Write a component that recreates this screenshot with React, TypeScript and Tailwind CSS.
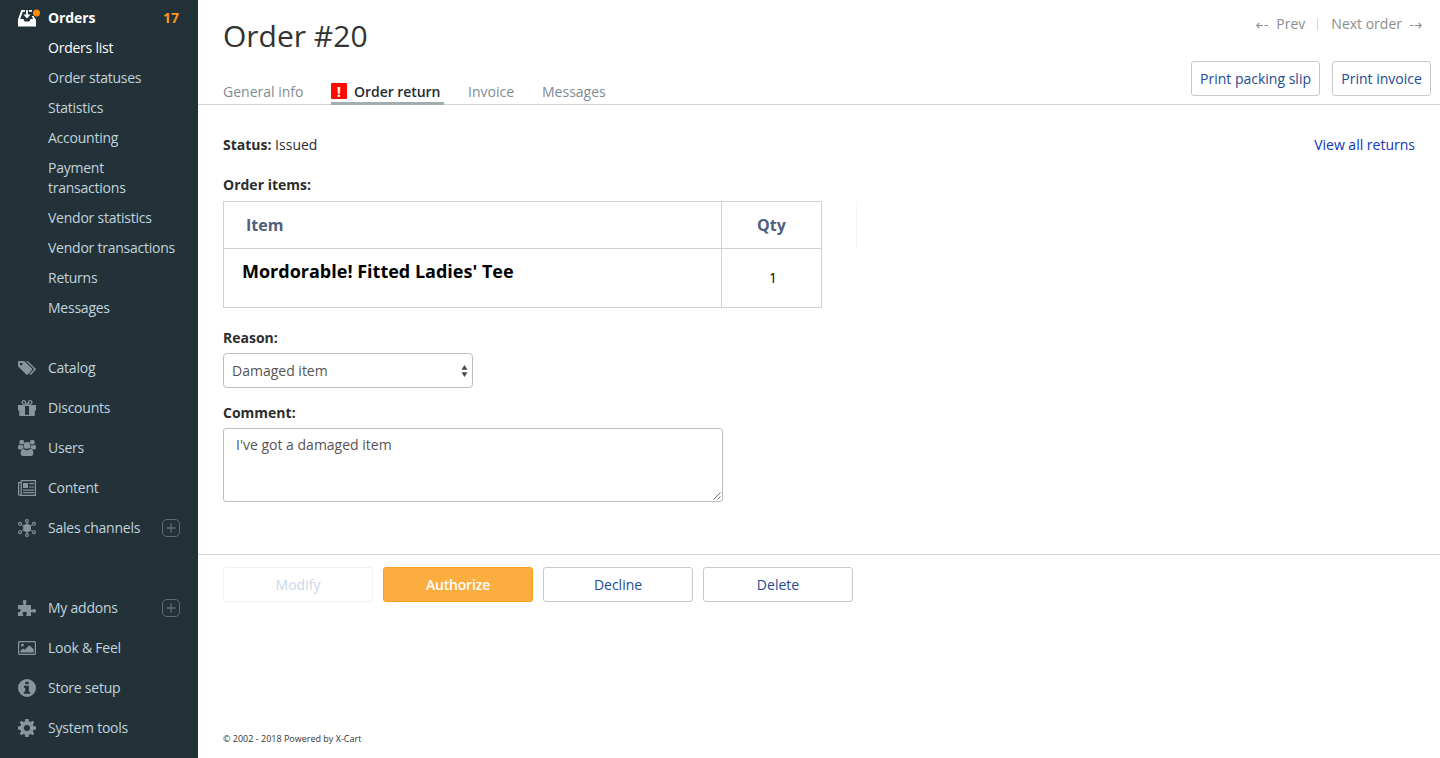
import type { ReactNode } from "react";

function OrdersIcon() {
  return (
    <svg width="24" height="19" viewBox="0 0 24 19" fill="none">
      <path d="M3.300 1H7V2.700H4.900L2 10.500H0ZM11 1h3v1.700h-3zM13.800 7h1.900l1.600 3.500h-2.100z" fill="#fff" />
      <path d="M0 10h5.400l1.200 2.400h4.800l1.200-2.400H18v7.500H0z" fill="#fff" />
      <path d="M8.100 1h1.800v4.600h2.700L9 9.400 5.400 5.600h2.700z" fill="#fff" />
      <circle cx="18.500" cy="4" r="3.500" fill="#ff8c00" />
    </svg>
  );
}

function Icon({ children }: { children: ReactNode }) {
  return (
    <svg width="18" height="18" viewBox="0 0 18 18" fill="#8a949b">
      {children}
    </svg>
  );
}

const icons: Record<string, ReactNode> = {
  catalog: (
    <Icon>
      <path
        fillRule="evenodd"
        d="M0 3.200Q0 2 1.200 2H5.400Q6.300 2 7 2.700L14 9.600Q14.600 10.300 14 11L9.700 15.400Q9 16 8.300 15.400L.900 8.300Q0 7.500 0 6.600ZM3.200 3.800A1.300 1.300 0 1 0 3.200 6.400A1.300 1.300 0 1 0 3.200 3.800Z"
      />
      <path d="M7.600 2H8.900Q9.800 2 10.500 2.700L17.500 9.600Q18.200 10.300 17.500 11L13.200 15.400Q12.300 16.200 11.300 15.100L15.500 10.900Q16.200 10.300 15.500 9.600L8.900 2.900Q8.300 2.300 7.600 2Z" />
    </Icon>
  ),
  discounts: (
    <Icon>
      <path d="M0 6h7v5.500H0zM11 6h7v5.500h-7z" />
      <path d="M1.200 11H7v6H2.200Q1.200 17 1.200 16zM11 11h5.800v5q0 1-1 1H11zM7 15.800h4V17H7zM7 6h4v1H7z" />
      <path
        d="M8.400 5.200H5.600A1.750 1.750 0 1 1 7.100 2.300ZM9.600 5.200h2.800A1.750 1.750 0 1 0 10.900 2.300Z"
        fill="none"
        stroke="#8a949b"
        strokeWidth="1.300"
      />
    </Icon>
  ),
  users: (
    <Icon>
      <circle cx="3.700" cy="3.200" r="2.400" />
      <circle cx="14.300" cy="3.200" r="2.400" />
      <circle cx="9" cy="6.400" r="3.400" />
      <path d="M0 8.500Q0 5.500 1.400 5.500Q3.200 6.900 4.800 6.100Q4.800 8 6 9.300Q4.500 9.400 3.400 10.400H1.500Q0 10.400 0 8.500ZM18 8.500Q18 5.500 16.600 5.500Q14.800 6.900 13.200 6.100Q13.200 8 12 9.300Q13.500 9.400 14.600 10.400H16.500Q18 10.400 18 8.500Z" />
      <path d="M2.600 14.600Q2.600 10 5.600 10Q9 12.400 12.400 10Q15.400 10 15.400 14.600Q15.400 17 13.200 17H4.800Q2.600 17 2.600 14.600Z" />
    </Icon>
  ),
  content: (
    <Icon>
      <path
        d="M3.200 1.600H17.400V16.400H2Q.600 16.400 .600 15V3.600H3.200M3.200 1.600V15Q3.200 16.400 2 16.400"
        fill="none"
        stroke="#8a949b"
        strokeWidth="1.300"
      />
      <path d="M5 4h5v5H5zM11 4h5v1.200h-5zM11 7.400h5v1.200h-5zM5 10.500h11v1.200H5zM5 13.100h11v1.200H5z" />
    </Icon>
  ),
  sales: (
    <Icon>
      <circle cx="9" cy="9" r="4" />
      <g fill="none" stroke="#8a949b" strokeWidth="1.100">
        <path d="M9 3.500V14.500M3.300 5.600L14.700 12.400M14.700 5.600L3.300 12.400" />
        <circle cx="9" cy="2" r="1.400" />
        <circle cx="9" cy="16" r="1.400" />
        <circle cx="2" cy="4.800" r="1.400" />
        <circle cx="16" cy="4.800" r="1.400" />
        <circle cx="2" cy="13.200" r="1.400" />
        <circle cx="16" cy="13.200" r="1.400" />
      </g>
    </Icon>
  ),
  addons: (
    <Icon>
      <path d="M0 6H5.200Q5.900 5.500 5.200 4.300Q3.900 1 6.700 1Q9.300 1 8.100 4.300Q7.300 5.500 8.200 6H13V10.200Q13.300 11.300 14.400 10.500Q18 9.100 18 11.900Q18 14.700 14.700 13.300Q13.300 12.400 13 13.500V17H8.200V15.800Q9.600 14.600 8.500 13.300Q6.600 12 4.900 13.300Q3.800 14.600 5.200 15.800V17H0V13Q2.600 13.600 2.600 11.500Q2.600 9.600 0 10.200Z" />
    </Icon>
  ),
  look: (
    <Icon>
      <rect x=".600" y="2.600" width="16.800" height="12.800" rx=".800" fill="none" stroke="#8a949b" strokeWidth="1.200" />
      <circle cx="4.400" cy="5.900" r="1.500" />
      <path d="M2.400 13.500V11.500L5.200 9.500L6.700 10.800L11.300 6.300L15.700 10.300V13.500Z" />
    </Icon>
  ),
  setup: (
    <Icon>
      <path
        fillRule="evenodd"
        d="M9 0A9 9 0 1 1 9 18A9 9 0 1 1 9 0ZM7.300 2.700V5.300H10.700V2.700ZM5.900 6.800V8.800H7.200V12.800H5.900V14.800H12.100V12.800H10.800V6.800Z"
      />
    </Icon>
  ),
  tools: (
    <Icon>
      <path
        fillRule="evenodd"
        d="M7.400 0H10.600L11.100 2.500L12.500 3.100L14.600 1.700L16.300 3.400L14.900 5.500L15.500 6.900L18 7.400V10.600L15.500 11.100L14.900 12.500L16.300 14.600L14.600 16.300L12.500 14.900L11.100 15.500L10.600 18H7.400L6.900 15.500L5.500 14.900L3.400 16.300L1.700 14.600L3.100 12.500L2.500 11.100L0 10.600V7.400L2.500 6.900L3.100 5.500L1.700 3.400L3.400 1.700L5.500 3.100L6.900 2.500ZM9 6A3 3 0 1 0 9 12A3 3 0 1 0 9 6Z"
      />
    </Icon>
  ),
};

function Plus() {
  return (
    <svg className="ml-auto" width="18" height="18" viewBox="0 0 18 18" fill="none" stroke="#5f6d74">
      <rect x=".5" y=".5" width="17" height="17" rx="4.500" />
      <path d="M9 4.500V13.500M4.500 9H13.500" strokeWidth="1.300" />
    </svg>
  );
}

function MenuItem({ icon, label, plus }: { icon: string; label: string; plus?: boolean }) {
  return (
    <a className="flex h-10 items-center pr-[18px] pl-[18px]">
      {icons[icon]}
      <span className="ml-3 whitespace-nowrap">{label}</span>
      {plus && <Plus />}
    </a>
  );
}

const subItems = [
  "Order statuses",
  "Statistics",
  "Accounting",
  "Payment transactions",
  "Vendor statistics",
  "Vendor transactions",
  "Returns",
  "Messages",
];

function Sidebar() {
  return (
    <aside className="flex w-[198px] shrink-0 flex-col bg-[#233239] pt-[3px] tracking-[-0.24px] text-[#c1d3dd]">
      <div className="flex h-[30px] items-center pr-[19px] pl-[18px] font-bold">
        <OrdersIcon />
        <span className="ml-1.5 tracking-[-0.1px] text-white">Orders</span>
        <span className="ml-auto tracking-normal text-[#ff9321]">17</span>
      </div>
      <a className="block py-[5px] pl-12 text-white">Orders list</a>
      {subItems.map((s) => (
        <a key={s} className="block py-[5px] pr-[20px] pl-12">
          {s}
        </a>
      ))}
      <nav className="mt-[25px]">
        <MenuItem icon="catalog" label="Catalog" />
        <MenuItem icon="discounts" label="Discounts" />
        <MenuItem icon="users" label="Users" />
        <MenuItem icon="content" label="Content" />
        <MenuItem icon="sales" label="Sales channels" plus />
      </nav>
      <nav className="mt-10">
        <MenuItem icon="addons" label="My addons" plus />
        <MenuItem icon="look" label="Look & Feel" />
        <MenuItem icon="setup" label="Store setup" />
        <MenuItem icon="tools" label="System tools" />
      </nav>
    </aside>
  );
}

const button =
  "flex h-[35px] items-center justify-center rounded-[3px] border border-[#c9c9c9] bg-white text-[#224b94]";

function Header() {
  return (
    <header className="flex h-[105px] justify-between border-b border-[#d3d6d6] pl-[25px] pr-[9px]">
      <div>
        <h1 className="mt-[16px] text-[30px] leading-10">Order #20</h1>
        <nav className="mt-[25px] flex h-6 text-[#7d8c94]">
          <a className="w-[108px] pt-px">General info</a>
          <a className="mr-6 flex w-[113px] border-b-[3px] border-[#a0adb1] pt-px font-semibold text-[#232d33]">
            <span className="mt-px mr-[7px] flex size-4 items-center justify-center rounded-[1px] bg-[#ff0a00] text-[15px] font-bold text-white">
              !
            </span>
            <span className="whitespace-nowrap tracking-[-0.05px]">Order return</span>
          </a>
          <a className="w-[74px] pt-px">Invoice</a>
          <a className="pt-px">Messages</a>
        </nav>
      </div>
      <div className="flex flex-col items-end">
        <div className="mt-[14px] mr-[9px] flex h-5 items-center text-[#8d8d8d]">
          <svg className="mt-[3px]" width="12" height="7" viewBox="0 0 12 7" fill="none" stroke="#8d8d8d" strokeWidth="1.200">
            <path d="M3.300 .900L.800 3.500L3.300 6.100M.800 3.500H7M8.500 3.500H12" />
          </svg>
          <span className="ml-[8px]">Prev</span>
          <span className="mr-[13px] ml-[12px] h-[11px] w-px bg-[#d3d3d3]" />
          <span>Next order</span>
          <svg className="mt-[3px] ml-[8px]" width="12" height="7" viewBox="0 0 12 7" fill="none" stroke="#8d8d8d" strokeWidth="1.200">
            <path d="M8.700 .900L11.200 3.500L8.700 6.100M11.200 3.500H5M3.500 3.500H0" />
          </svg>
        </div>
        <div className="mt-[27px] flex gap-3">
          <button className={`${button} w-[129px]`}>Print packing slip</button>
          <button className={`${button} w-[99px]`}>Print invoice</button>
        </div>
      </div>
    </header>
  );
}

function ItemsTable() {
  return (
    <div className="mt-[6px] flex items-start">
      <div className="grid w-[599px] grid-cols-[497px_100px] border border-[#d1d1d1]">
        <div className="flex h-[47px] items-center border-b border-[#d1d1d1] pl-[22px] text-base font-bold text-[#4f5f7d]">
          Item
        </div>
        <div className="flex items-center justify-center border-b border-l border-[#d1d1d1] text-base font-bold text-[#4f5f7d]">
          Qty
        </div>
        <div className="h-[58px] pt-[9px] pl-[18px] text-lg leading-[26px] font-bold text-black">
          Mordorable! Fitted Ladies' Tee
        </div>
        <div className="flex items-center justify-center border-l border-[#d1d1d1] pl-[3px] text-black">1</div>
      </div>
      <div className="ml-[34px] h-[47px] w-px bg-[#f4f4f4]" />
    </div>
  );
}

function ReturnForm() {
  return (
    <section className="h-[449px] pt-[30px] pl-[25px] text-[#2d2d2d]">
      <div className="flex justify-between pr-[25px]">
        <div>
          <b>Status:</b> Issued
        </div>
        <a className="text-[#0f35b8]">View all returns</a>
      </div>
      <div className="mt-5 font-bold">Order items:</div>
      <ItemsTable />
      <div className="mt-5 font-bold">Reason:</div>
      <div className="mt-[5px] flex h-[35px] w-[250px] items-center justify-between rounded-[4px] border border-[#bdbdbd] bg-white pr-1 pl-2 text-[#555]">
        Damaged item
        <svg width="7" height="12" viewBox="0 0 7 12" fill="#4c4c4c">
          <path d="M.5 4.700L3.500 0L6.500 4.700ZM.5 7.300H6.500L3.500 12Z" />
        </svg>
      </div>
      <div className="mt-[15px] font-bold">Comment:</div>
      <div className="mt-[5px] flex h-[74px] w-[500px] justify-between rounded-[3px] border border-[#bdbdbd] bg-white pt-[6px] pl-3 text-[#555]">
        I've got a damaged item
        <svg className="mr-px mb-px self-end" width="8" height="8" viewBox="0 0 8 8" stroke="#6b6b6b" strokeWidth="1">
          <path d="M.5 7.500L7.500 .5M4.500 7.500L7.500 4.500" />
        </svg>
      </div>
    </section>
  );
}

export default function App() {
  return (
    <div className="flex h-[758px] w-[1440px] overflow-hidden bg-white font-['Open_Sans','Noto_Sans',sans-serif] text-[14px] leading-5 text-[#333]">
      <Sidebar />
      <main className="flex min-w-0 flex-1 flex-col">
        <Header />
        <ReturnForm />
        <div className="flex gap-[10px] border-t border-[#d3d6d6] pt-3 pl-[25px]">
          <button className="flex h-[35px] w-[150px] items-center justify-center rounded-[3px] border border-[#f1f1f1] text-[#cad6ea]">
            Modify
          </button>
          <button className="flex h-[35px] w-[150px] items-center justify-center rounded-[3px] border border-[#f9a11b] bg-[#fbad40] font-semibold tracking-[-0.2px] text-white">
            Authorize
          </button>
          <button className={`${button} w-[150px]`}>Decline</button>
          <button className={`${button} w-[150px]`}>Delete</button>
        </div>
        <footer className="mt-auto mb-[9px] pl-[25px] text-[9px]">© 2002 - 2018 Powered by X-Cart</footer>
      </main>
    </div>
  );
}
